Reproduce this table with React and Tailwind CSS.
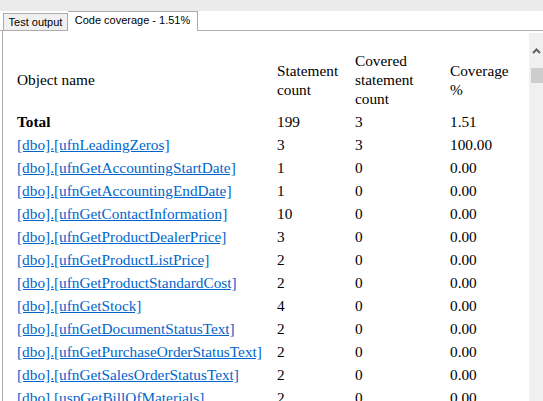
export default function App() {
  const rows = [
    ['[dbo].[ufnLeadingZeros]', '3', '3', '100.00'],
    ['[dbo].[ufnGetAccountingStartDate]', '1', '0', '0.00'],
    ['[dbo].[ufnGetAccountingEndDate]', '1', '0', '0.00'],
    ['[dbo].[ufnGetContactInformation]', '10', '0', '0.00'],
    ['[dbo].[ufnGetProductDealerPrice]', '3', '0', '0.00'],
    ['[dbo].[ufnGetProductListPrice]', '2', '0', '0.00'],
    ['[dbo].[ufnGetProductStandardCost]', '2', '0', '0.00'],
    ['[dbo].[ufnGetStock]', '4', '0', '0.00'],
    ['[dbo].[ufnGetDocumentStatusText]', '2', '0', '0.00'],
    ['[dbo].[ufnGetPurchaseOrderStatusText]', '2', '0', '0.00'],
    ['[dbo].[ufnGetSalesOrderStatusText]', '2', '0', '0.00'],
    ['[dbo].[uspGetBillOfMaterials]', '2', '0', '0.00'],
  ];

  const cell = 'px-[2px] py-[2px] align-middle text-left';

  return (
    <div className="w-[543px] h-[401px] overflow-hidden bg-white flex flex-col">
      {/* Top band */}
      <div className="h-[11px] bg-[#ebebeb] shrink-0" />

      {/* Tabs */}
      <div className="h-[20px] flex items-end shrink-0 font-['Liberation_Sans',sans-serif] text-[11px] text-black">
        <div className="w-[3px] h-full border-b border-[#acacac]" />
        <div className="w-[65px] h-[18px] bg-[#f0f0f0] border border-[#acacac] flex items-center justify-center leading-none">
          Test output
        </div>
        <div className="w-[130px] h-[20px] bg-white border border-b-0 border-l-0 border-[#acacac] flex items-center justify-center leading-none pb-[2px]">
          Code coverage - 1.51%
        </div>
        <div className="flex-1 h-full border-b border-[#acacac]" />
      </div>

      {/* Content */}
      <div className="flex-1 flex min-h-0">
        <div className="w-[3px] border-r border-[#acacac] shrink-0" />
        <div className="flex-1 overflow-hidden pl-[12px] pt-[18px] font-['Liberation_Serif',serif] text-[15.3px] leading-[19px] text-black">
          <table className="border-collapse">
            <thead>
              <tr>
                <th className={`${cell} font-normal w-[260px]`}>Object name</th>
                <th className={`${cell} font-normal w-[78px]`}>Statement<br />count</th>
                <th className={`${cell} font-normal w-[95px]`}>Covered<br />statement<br />count</th>
                <th className={`${cell} font-normal w-[80px]`}>Coverage<br />%</th>
              </tr>
            </thead>
            <tbody>
              <tr>
                <td className={`${cell} font-bold`}>Total</td>
                <td className={cell}>199</td>
                <td className={cell}>3</td>
                <td className={cell}>1.51</td>
              </tr>
              {rows.map((r) => (
                <tr key={r[0]}>
                  <td className={`${cell} whitespace-nowrap`}>
                    <a href="#" className="text-[#0066cc] underline">{r[0]}</a>
                  </td>
                  <td className={cell}>{r[1]}</td>
                  <td className={cell}>{r[2]}</td>
                  <td className={cell}>{r[3]}</td>
                </tr>
              ))}
            </tbody>
          </table>
        </div>

        {/* Scrollbar */}
        <div className="w-[14px] shrink-0 pt-[2px] flex flex-col">
          <div className="flex-1 bg-[#f0f0f0] flex flex-col items-center">
            <div className="h-[35px] w-full flex items-center justify-center">
              <svg width="9" height="6" viewBox="0 0 9 6">
                <polyline points="1,5 4.5,1.5 8,5" fill="none" stroke="#606060" strokeWidth="2" />
              </svg>
            </div>
            <div className="w-[12px] h-[15px] bg-[#cdcdcd] ml-[2px]" />
          </div>
        </div>
      </div>
    </div>
  );
}
